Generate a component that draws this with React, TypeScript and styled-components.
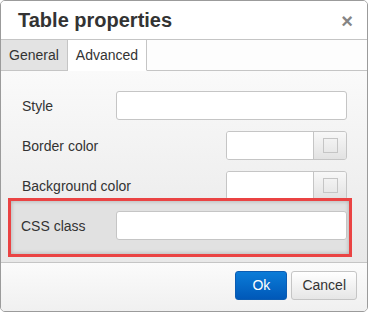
import styled, { createGlobalStyle } from "styled-components";

const GlobalStyle = createGlobalStyle`
  html, body {
    margin: 0;
    padding: 0;
    background: #ffffff;
  }
  body {
    font-family: "Liberation Sans", Arial, sans-serif;
  }
`;

type Field = { label: string; kind: "text" | "color" };

const fields: Field[] = [
  { label: "Style", kind: "text" },
  { label: "Border color", kind: "color" },
  { label: "Background color", kind: "color" },
];

const App = () => {
  return (
    <>
      <GlobalStyle />
      <Window>
        <Header>
          <Title>Table properties</Title>
          <Close>×</Close>
        </Header>
        <Tabs>
          <Tab>General</Tab>
          <Tab active>Advanced</Tab>
        </Tabs>
        <Body>
          {fields.map(f => (
            <FormRow key={f.label}>
              <Label>{f.label}</Label>
              {f.kind === "text" ? (
                <TextInput />
              ) : (
                <ColorBox>
                  <ColorInput />
                  <PickerButton>
                    <Swatch />
                  </PickerButton>
                </ColorBox>
              )}
            </FormRow>
          ))}
          <Highlight>
            <FormRow>
              <Label>CSS class</Label>
              <TextInput />
            </FormRow>
          </Highlight>
        </Body>
        <Footer>
          <PrimaryButton>Ok</PrimaryButton>
          <Button>Cancel</Button>
        </Footer>
      </Window>
    </>
  );
};

export default App;

const Window = styled.div`
  width: 368px;
  height: 312px;
  box-sizing: border-box;
  border: 1px solid #9b9b9b;
  border-radius: 5px;
  overflow: hidden;
  display: flex;
  flex-direction: column;
  background: #f0f0f0;
  color: #333;
`;

const Header = styled.div`
  height: 38px;
  flex: none;
  background: #ffffff;
  display: flex;
  align-items: center;
  justify-content: space-between;
  padding: 0 14px 0 17px;
`;

const Title = styled.div`
  font-size: 20px;
  font-weight: bold;
  color: #333;
  margin-top: 1px;
`;

const Close = styled.div`
  font-size: 20px;
  font-weight: bold;
  color: #858585;
  line-height: 1;
  margin-top: 1px;
`;

const Tabs = styled.div`
  flex: none;
  display: flex;
  background: #fdfdfd;
  border-top: 1px solid #c5c5c5;
  border-bottom: 1px solid #c5c5c5;
  box-sizing: border-box;
  height: 32px;
`;

const Tab = styled.div<{ active?: boolean }>`
  font-size: 14px;
  color: #333;
  display: flex;
  align-items: center;
  padding: 0 8px;
  background: ${p => (p.active ? "#ffffff" : "#e3e3e3")};
  border-right: 1px solid #c5c5c5;
  margin-bottom: -1px;
  border-bottom: 1px solid ${p => (p.active ? "#ffffff" : "#c5c5c5")};
`;

const Body = styled.div`
  flex: 1;
  background: linear-gradient(#fafafa, #e8e8e8);
  padding: 20px 20px 0 20px;
  display: flex;
  flex-direction: column;
  gap: 11px;
`;

const FormRow = styled.div`
  display: flex;
  align-items: center;
  justify-content: space-between;
  height: 29px;
`;

const Label = styled.div`
  font-size: 14px;
  color: #333;
  padding-left: 1px;
`;

const TextInput = styled.div`
  width: 231px;
  height: 29px;
  box-sizing: border-box;
  background: #ffffff;
  border: 1px solid #c5c5c5;
  border-radius: 3px;
`;

const ColorBox = styled.div`
  display: flex;
  width: 121px;
  height: 29px;
  box-sizing: border-box;
  border: 1px solid #c5c5c5;
  border-radius: 3px;
  overflow: hidden;
`;

const ColorInput = styled.div`
  flex: 1;
  background: #ffffff;
`;

const PickerButton = styled.div`
  width: 32px;
  border-left: 1px solid #c5c5c5;
  background: linear-gradient(#f8f8f8, #e2e2e2);
  display: flex;
  align-items: center;
  justify-content: center;
`;

const Swatch = styled.div`
  width: 13px;
  height: 13px;
  border: 1px solid #c5c5c5;
  background: transparent;
`;

const Highlight = styled.div`
  margin: -13px -5px 0 -13px;
  padding: 10px 2px 14px 9px;
  border: 3px solid #ea4343;
  background: #e1e1e1;
  box-shadow: inset 0 0 4px rgba(0, 0, 0, 0.25);
`;

const Footer = styled.div`
  height: 49px;
  flex: none;
  box-sizing: border-box;
  border-top: 1px solid #c5c5c5;
  background: linear-gradient(#fbfbfb, #f0f0f0);
  display: flex;
  align-items: center;
  justify-content: flex-end;
  gap: 4px;
  padding: 0 10px 4px 0;
`;

const Button = styled.div`
  height: 29px;
  box-sizing: border-box;
  padding: 0 10px;
  display: flex;
  align-items: center;
  font-size: 14px;
  color: #333;
  border: 1px solid #c5c5c5;
  border-radius: 3px;
  background: linear-gradient(#ffffff, #e6e6e6);
`;

const PrimaryButton = styled(Button)`
  width: 52px;
  justify-content: center;
  color: #ffffff;
  border-color: #0b5cb2;
  background: linear-gradient(#0b7cd8, #0058b8);
`;
